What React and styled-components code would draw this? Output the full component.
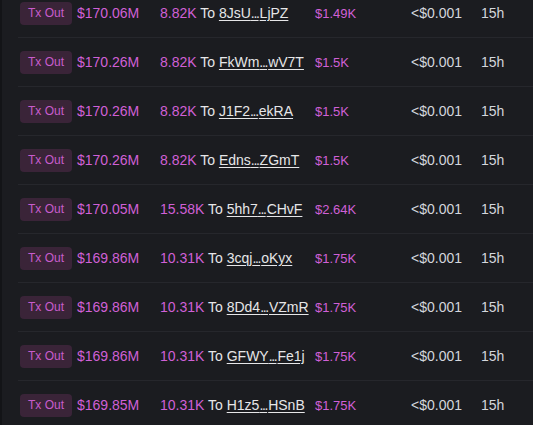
import styled, { createGlobalStyle } from 'styled-components';

const GlobalStyle = createGlobalStyle`
  html, body {
    margin: 0;
    padding: 0;
    background: #1b1c20;
    overflow: hidden;
  }
  body {
    font-family: "Liberation Sans", Arial, sans-serif;
  }
`;

const Page = styled.div`
  width: 533px;
  height: 425px;
  overflow: hidden;
  background: #1b1c20;
  border-left: 2px solid #131417;
  box-sizing: border-box;
`;

const List = styled.div`
  margin-top: -11px;
  padding-left: 16px;
`;

const Row = styled.div`
  display: grid;
  grid-template-columns: 57px 83px 155px 96px 70px 1fr;
  align-items: center;
  height: 48px;
  padding-left: 2px;
  border-bottom: 1px solid #26272c;
`;

const Badge = styled.span`
  display: inline-flex;
  align-items: center;
  justify-content: center;
  width: 52px;
  height: 23px;
  border-radius: 4px;
  background: #3a2438;
  color: #c85ccc;
  font-size: 12px;
`;

const Pink = styled.span`
  color: #d060d6;
  font-size: ${p => (p.$small ? '13px' : '14px')};
  white-space: nowrap;
`;

const Transfer = styled.div`
  font-size: 14px;
  white-space: nowrap;
  color: #e6e6e8;
`;

const Addr = styled.a`
  color: #e6e6e8;
  text-decoration: underline;
  text-underline-offset: 2px;
`;

const Dots = styled.span`
  letter-spacing: -1.3px;
  margin-right: 1px;
`;

const Muted = styled.span`
  color: #d3d6dc;
  font-size: 14px;
`;

const rows = [
  ['$170.06M', '8.82K', '8JsU', 'LjPZ', '$1.49K'],
  ['$170.26M', '8.82K', 'FkWm', 'wV7T', '$1.5K'],
  ['$170.26M', '8.82K', 'J1F2', 'ekRA', '$1.5K'],
  ['$170.26M', '8.82K', 'Edns', 'ZGmT', '$1.5K'],
  ['$170.05M', '15.58K', '5hh7', 'CHvF', '$2.64K'],
  ['$169.86M', '10.31K', '3cqj', 'oKyx', '$1.75K'],
  ['$169.86M', '10.31K', '8Dd4', 'VZmR', '$1.75K'],
  ['$169.86M', '10.31K', 'GFWY', 'Fe1j', '$1.75K'],
  ['$169.85M', '10.31K', 'H1z5', 'HSnB', '$1.75K'],
];

const App = () => {
  return (
    <>
      <GlobalStyle />
      <Page>
        <List>
          {rows.map(([mc, amount, head, tail, value], i) => (
            <Row key={i}>
              <div><Badge>Tx Out</Badge></div>
              <Pink>{mc}</Pink>
              <Transfer>
                <Pink>{amount}</Pink> To <Addr>{head}<Dots>...</Dots>{tail}</Addr>
              </Transfer>
              <Pink $small>{value}</Pink>
              <Muted>&lt;$0.001</Muted>
              <Muted>15h</Muted>
            </Row>
          ))}
        </List>
      </Page>
    </>
  );
};

export default App;
